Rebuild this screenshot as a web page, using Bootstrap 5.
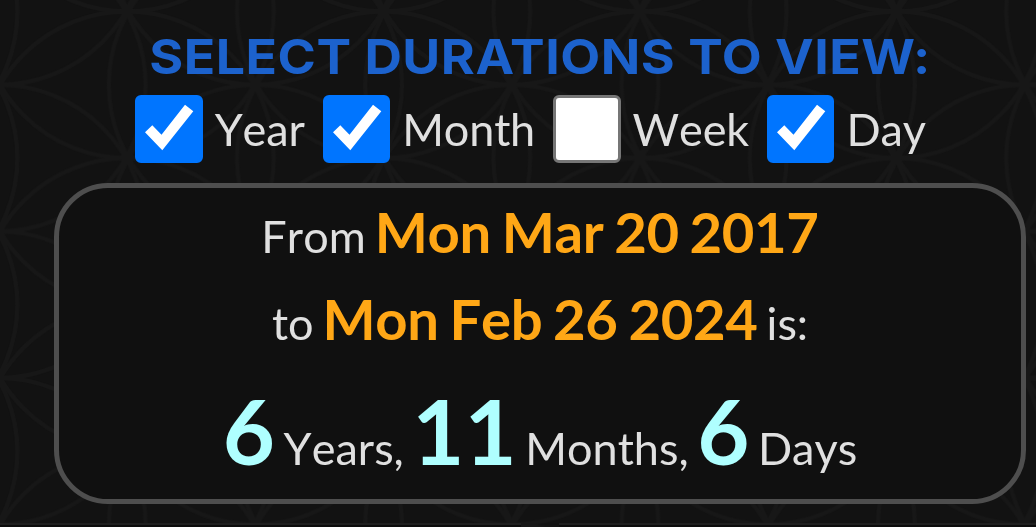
<!DOCTYPE html>
<html lang="en">
<head>
    <meta charset="UTF-8">
    <meta name="viewport" content="width=device-width, initial-scale=1.0">
    <title>Date Duration</title>

    <link href="https://cdn.jsdelivr.net/npm/bootstrap@5.3.0/dist/css/bootstrap.min.css" rel="stylesheet">

    <style>
        body {
            height: 527px;
            background-color: #121212;
            color: #e0e0e0;
            font-family: "Lato", sans-serif;
            font-size: 45px;
            font-kerning: none;
            line-height: 1.2;
        }

        /* flower pattern behind the page */
        .flower-bg {
            z-index: -1;
        }

        .duration-page {
            height: 527px;
            padding: 29px 10px 0 54px;
        }

        .duration-title {
            height: 66px;
            margin: 0;
            color: #1c62cd;
            font-family: "Inter", sans-serif;
            font-size: 48px;
            font-weight: 700;
            font-kerning: normal;
            letter-spacing: 0.5px;
            line-height: 56px;
            white-space: nowrap;
            transform: scaleX(1.08);
        }

        .duration-options {
            height: 68px;
            margin-right: 19px;
            gap: 18px;
        }

        .duration-option input {
            appearance: none;
            width: 67.5px;
            height: 67.5px;
            background-color: #fff;
            border: 3px solid #767676;
            border-radius: 6px;
        }

        .duration-option input:checked {
            background-color: #0075ff;
            border-color: #0075ff;
        }

        .duration-option svg {
            top: 0;
            left: 0;
        }

        .duration-option label {
            margin-left: 12px;
            letter-spacing: -0.15px;
            line-height: 68px;
        }

        .result-box {
            height: 321px;
            margin-top: 20px;
            background-color: #101010;
            border: 5px solid #4e4e4e;
            border-radius: 54px;
        }

        .result-line {
            height: 87px;
            line-height: 87px;
            white-space: nowrap;
            word-spacing: -2.5px;
        }

        .result-date {
            color: #ffa716;
            font-size: 56.25px;
            font-weight: 700;
            letter-spacing: -0.35px;
        }

        .result-total {
            height: 137px;
            line-height: 137px;
            word-spacing: -3px;
        }

        .result-number {
            color: #afffff;
            font-size: 90px;
            font-weight: 700;
        }

        .next-panels {
            height: 4px;
            margin: 19px -10px 0 -54px;
            gap: 38px;
        }

        .next-panel {
            background-color: #0c0c0c;
            border-top: 2px solid #1f1f1f;
        }

        .next-panel-left {
            width: 521px;
        }
    </style>
</head>
<body class="overflow-hidden">

    <svg class="flower-bg position-fixed top-0 start-0" width="1036" height="527" aria-hidden="true">
        <defs>
            <pattern id="flower" width="256.4" height="146.6" patternUnits="userSpaceOnUse" patternTransform="translate(-1 84.8)">
                <g fill="none" stroke="#171717" stroke-width="4">
                    <circle cx="0" cy="-146.6" r="146.6"/>
                    <circle cx="0" cy="0" r="146.6"/>
                    <circle cx="0" cy="146.6" r="146.6"/>
                    <circle cx="0" cy="293.2" r="146.6"/>
                    <circle cx="256.4" cy="-146.6" r="146.6"/>
                    <circle cx="256.4" cy="0" r="146.6"/>
                    <circle cx="256.4" cy="146.6" r="146.6"/>
                    <circle cx="256.4" cy="293.2" r="146.6"/>
                    <circle cx="128.2" cy="-73.3" r="146.6"/>
                    <circle cx="128.2" cy="73.3" r="146.6"/>
                    <circle cx="128.2" cy="219.9" r="146.6"/>
                    <circle cx="-128.2" cy="-73.3" r="146.6"/>
                    <circle cx="-128.2" cy="73.3" r="146.6"/>
                    <circle cx="-128.2" cy="219.9" r="146.6"/>
                    <circle cx="384.6" cy="-73.3" r="146.6"/>
                    <circle cx="384.6" cy="73.3" r="146.6"/>
                    <circle cx="384.6" cy="219.9" r="146.6"/>
                </g>
            </pattern>
        </defs>
        <rect width="1036" height="527" fill="url(#flower)"/>
    </svg>

    <main class="duration-page">
        <h1 class="duration-title text-center">SELECT DURATIONS TO VIEW:</h1>

        <form class="duration-options d-flex justify-content-center">
            <div class="duration-option position-relative d-flex">
                <input type="checkbox" id="year" checked>
                <svg class="position-absolute pe-none" width="67" height="67"><path fill="#fff" d="M10 37.3 17.3 30.3 26.5 39.8 50 9.7 58.3 16.3 27.3 55.3z"/></svg>
                <label for="year">Year</label>
            </div>
            <div class="duration-option position-relative d-flex">
                <input type="checkbox" id="month" checked>
                <svg class="position-absolute pe-none" width="67" height="67"><path fill="#fff" d="M10 37.3 17.3 30.3 26.5 39.8 50 9.7 58.3 16.3 27.3 55.3z"/></svg>
                <label for="month">Month</label>
            </div>
            <div class="duration-option position-relative d-flex">
                <input type="checkbox" id="week">
                <label for="week">Week</label>
            </div>
            <div class="duration-option position-relative d-flex">
                <input type="checkbox" id="day" checked>
                <svg class="position-absolute pe-none" width="67" height="67"><path fill="#fff" d="M10 37.3 17.3 30.3 26.5 39.8 50 9.7 58.3 16.3 27.3 55.3z"/></svg>
                <label for="day">Day</label>
            </div>
        </form>

        <section class="result-box text-center">
            <div class="result-line">From <span class="result-date">Mon Mar 20 2017</span></div>
            <div class="result-line">to <span class="result-date">Mon Feb 26 2024</span> is:</div>
            <div class="result-line result-total"><span class="result-number">6</span> Years, <span class="result-number">11</span> Months, <span class="result-number">6</span> Days</div>
        </section>

        <div class="next-panels d-flex">
            <div class="next-panel next-panel-left"></div>
            <div class="next-panel flex-grow-1"></div>
        </div>
    </main>

    <script src="https://cdn.jsdelivr.net/npm/bootstrap@5.3.0/dist/js/bootstrap.bundle.min.js"></script>
</body>
</html>
